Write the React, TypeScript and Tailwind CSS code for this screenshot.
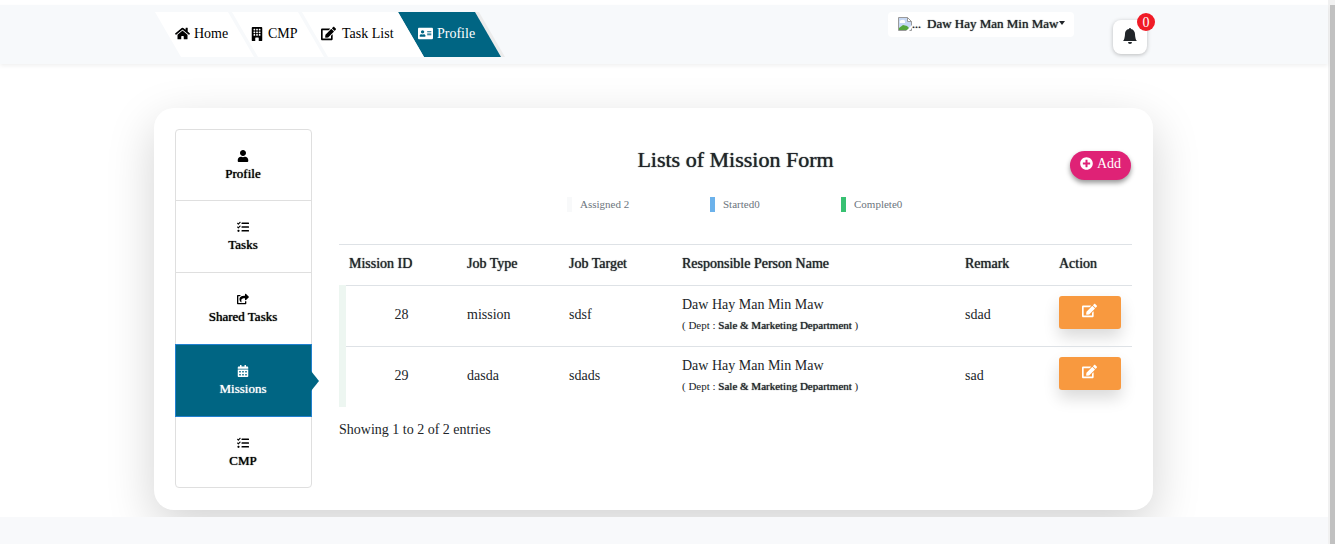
import React from "react";
import {
  FaHome,
  FaEdit,
  FaAddressCard,
  FaUser,
  FaTasks,
  FaShareSquare,
  FaCalendarAlt,
  FaPlusCircle,
} from "react-icons/fa";
import { BsBellFill, BsBuildingFill } from "react-icons/bs";

const missions = [
  { id: 28, type: "mission", target: "sdsf", person: "Daw Hay Man Min Maw", dept: "Sale & Marketing Department", remark: "sdad" },
  { id: 29, type: "dasda", target: "sdads", person: "Daw Hay Man Min Maw", dept: "Sale & Marketing Department", remark: "sad" },
];

const sideItems = [
  { label: "Profile", Icon: FaUser },
  { label: "Tasks", Icon: FaTasks },
  { label: "Shared Tasks", Icon: FaShareSquare },
  { label: "Missions", Icon: FaCalendarAlt, active: true },
  { label: "CMP", Icon: FaTasks },
];

const legend = [
  { label: "Assigned 2", color: "bg-[#f8f9fa]" },
  { label: "Started0", color: "bg-[#6cb2eb]" },
  { label: "Complete0", color: "bg-[#38c172]" },
];

const columns = [
  { label: "Mission ID", width: "w-[118px]" },
  { label: "Job Type", width: "w-[102px]" },
  { label: "Job Target", width: "w-[113px]" },
  { label: "Responsible Person Name", width: "" },
  { label: "Remark", width: "w-[94px]" },
  { label: "Action", width: "w-[83px]" },
];

const slant = "[clip-path:polygon(0_0,calc(100%_-_26px)_0,100%_100%,26px_100%)]";
const rule = "border-t border-t-[#dee2e6]";
const cell = `${rule} pb-[4px] pl-[10px]`;

function BrokenImage() {
  return (
    <svg width="14" height="16" viewBox="0 0 14 16" role="img" aria-label="Avatar">
      <path d="M.5 1.5h9l4 4v9H.5z" fill="#c6d8f4" stroke="#9a9a9a" />
      <path d="M2 7a2 2 0 0 1 2-3 2 2 0 0 1 3 2v1z" fill="#fff" />
      <path d="M1 14V12l4-3 4 1 2 2v2z" fill="#55a63c" />
      <path d="M9.5 1.5v4h4z" fill="#fff" stroke="#9a9a9a" />
      <path d="M14 9v3L10 16H7z" fill="#fff" />
    </svg>
  );
}

function TopNav() {
  return (
    <nav className="flex text-[14px] text-black">
      <a href="#home" className={`flex h-[45px] w-[99px] items-center gap-1 bg-white pb-0.5 pl-[20px] ${slant}`}>
        <FaHome size={15} /> Home
      </a>
      <a href="#cmp" className={`-ml-[22px] flex h-[45px] w-[92px] items-center gap-1 bg-white pb-0.5 pl-[18px] ${slant}`}>
        <BsBuildingFill size={14} /> CMP
      </a>
      <a href="#tasks" className={`-ml-[22px] flex h-[45px] w-[128px] items-center gap-1.5 bg-white pb-0.5 pl-[19px] ${slant}`}>
        <FaEdit size={15} /> Task List
      </a>
      <span className={`-ml-[32px] bg-[#ececec] pr-1 ${slant}`}>
        <a href="#profile" className={`flex h-[45px] w-[103px] items-center gap-1 bg-[#006583] pb-0.5 pl-[20px] text-white ${slant}`}>
          <FaAddressCard size={15} /> Profile
        </a>
      </span>
    </nav>
  );
}

export default function App() {
  return (
    <div className="flex min-h-screen bg-[#f8f9fb] font-['Liberation_Serif',serif] text-[14px] text-[#212529]">
      <div className="min-w-0 flex-1">
        <div className="h-[5px] bg-white" />
        <header className="relative flex h-[59px] items-start justify-between bg-[#f7f9fb] pr-[181px] pl-[155px] shadow-[0_2px_4px_rgba(0,0,0,0.06)]">
          <div className="pt-[7px]">
            <TopNav />
          </div>
          <div className="flex items-start pt-[7px]">
            <button className="flex h-[25px] w-[186px] items-center rounded-sm bg-white pb-0.5 pl-[10px] text-[13px] whitespace-nowrap [text-shadow:0_0_1px_currentColor]">
              <BrokenImage />
              <span className="mr-1.5 text-[12px]">...</span>
              Daw Hay Man Min Maw
              <span className="mb-0.5 ml-px border-x-[3px] border-t-[4px] border-x-transparent border-t-[#212529]" />
            </button>
            <button aria-label="Notifications" className="relative mt-2 ml-[39px] flex size-[34px] items-center justify-center rounded-lg bg-white pb-0.5 shadow-[0_1px_4px_rgba(0,0,0,0.25)]">
              <BsBellFill size={16} />
              <span className="absolute -top-[7px] -right-[8px] flex size-[18px] items-center justify-center rounded-full bg-[#f01b26] text-[14px] text-white">0</span>
            </button>
          </div>
        </header>

        <main className="overflow-hidden bg-white pt-[44px] pr-[175px] pb-[7px] pl-[154px]">
          <section className="rounded-[20px] bg-white p-[21px] pb-[22px] shadow-[0_16px_48px_rgba(0,0,0,0.175)]">
            <div className="flex items-start">
              <nav className="flex w-[137px] shrink-0 flex-col text-[13px] text-black">
                {sideItems.map(({ label, Icon, active }) => (
                  <a
                    key={label}
                    href="#section"
                    className={`relative -mt-px flex h-[73px] flex-col items-center justify-center gap-1 border pt-px pr-px leading-[16px] [text-shadow:0_0_1px_currentColor] first:mt-0 first:h-[72px] first:rounded-t last:h-[72px] last:rounded-b ${
                      active ? "z-10 border-[#2180cf] bg-[#006583] text-white" : "border-[#dfdfdf] bg-white"
                    }`}
                  >
                    <Icon size={12} />
                    {label}
                    {active && (
                      <span className="absolute top-[26px] left-full border-y-[10px] border-l-[8px] border-y-transparent border-l-[#006583]" />
                    )}
                  </a>
                ))}
              </nav>

              <div className="ml-[27px] min-w-0 flex-1">
                <div className="grid h-[68px] grid-cols-[1fr_auto_1fr] pt-[18px]">
                  <h1 className="col-start-2 text-[22px] leading-[26px] [text-shadow:0_0_1px_currentColor]">Lists of Mission Form</h1>
                  <button className="mt-1 mr-px flex h-[29px] w-[61px] items-start gap-1 justify-self-end rounded-full bg-[#df2276] pt-[4px] pl-[10px] text-[14px] leading-[18px] text-white shadow-[0_3px_5px_rgba(0,0,0,0.4)]">
                    <FaPlusCircle size={13} className="mt-[2px]" /> Add
                  </button>
                </div>
                <div className="flex pl-[228px] text-[11px] leading-[15px] text-[#6c757d]">
                  {legend.map((item) => (
                    <div key={item.label} className="flex w-[143px] gap-2 last:-ml-[12px]">
                      <span className={`h-[15px] w-[5px] ${item.color}`} />
                      {item.label}
                    </div>
                  ))}
                </div>

                <table className="mt-[32px] w-full table-fixed border-separate border-spacing-0 text-left">
                  <thead>
                    <tr className="h-[41px]">
                      {columns.map((c) => (
                        <th key={c.label} className={`${cell} ${c.width} font-normal [text-shadow:0_0_1px_currentColor]`}>{c.label}</th>
                      ))}
                    </tr>
                  </thead>
                  <tbody>
                    {missions.map((m) => (
                      <tr key={m.id} className="h-[61px]">
                        <td className={`${rule} relative pb-[4px] pl-[7px] text-center`}>
                          <span className="absolute -top-px bottom-0 left-0 w-[7px] bg-[#edf6f1]" />
                          {m.id}
                        </td>
                        <td className={cell}>{m.type}</td>
                        <td className={cell}>{m.target}</td>
                        <td className={`${rule} pb-[2px] pl-[10px] leading-[21px]`}>
                          {m.person}
                          <div className="text-[11px]">
                            ( Dept : <span className="[text-shadow:0_0_1px_currentColor]">{m.dept}</span> )
                          </div>
                        </td>
                        <td className={cell}>{m.remark}</td>
                        <td className={`${rule} pb-[7px] pl-[10px]`}>
                          <button aria-label={`Edit mission ${m.id}`} className="flex h-[33px] w-[62px] items-center justify-center rounded-[3px] bg-[#f8993f] pr-px pb-[4px] text-white shadow-[0_8px_16px_rgba(0,0,0,0.15)]">
                            <FaEdit size={15} />
                          </button>
                        </td>
                      </tr>
                    ))}
                  </tbody>
                </table>
                <p className="mt-3 leading-[21px]">Showing 1 to 2 of 2 entries</p>
              </div>
            </div>
          </section>
        </main>
      </div>
      <div className="flex w-[7px] shrink-0 bg-[#f1f1f1] pt-[5px] pl-[2px]">
        <div className="flex-1 bg-[#c1c1c1]" />
      </div>
    </div>
  );
}
